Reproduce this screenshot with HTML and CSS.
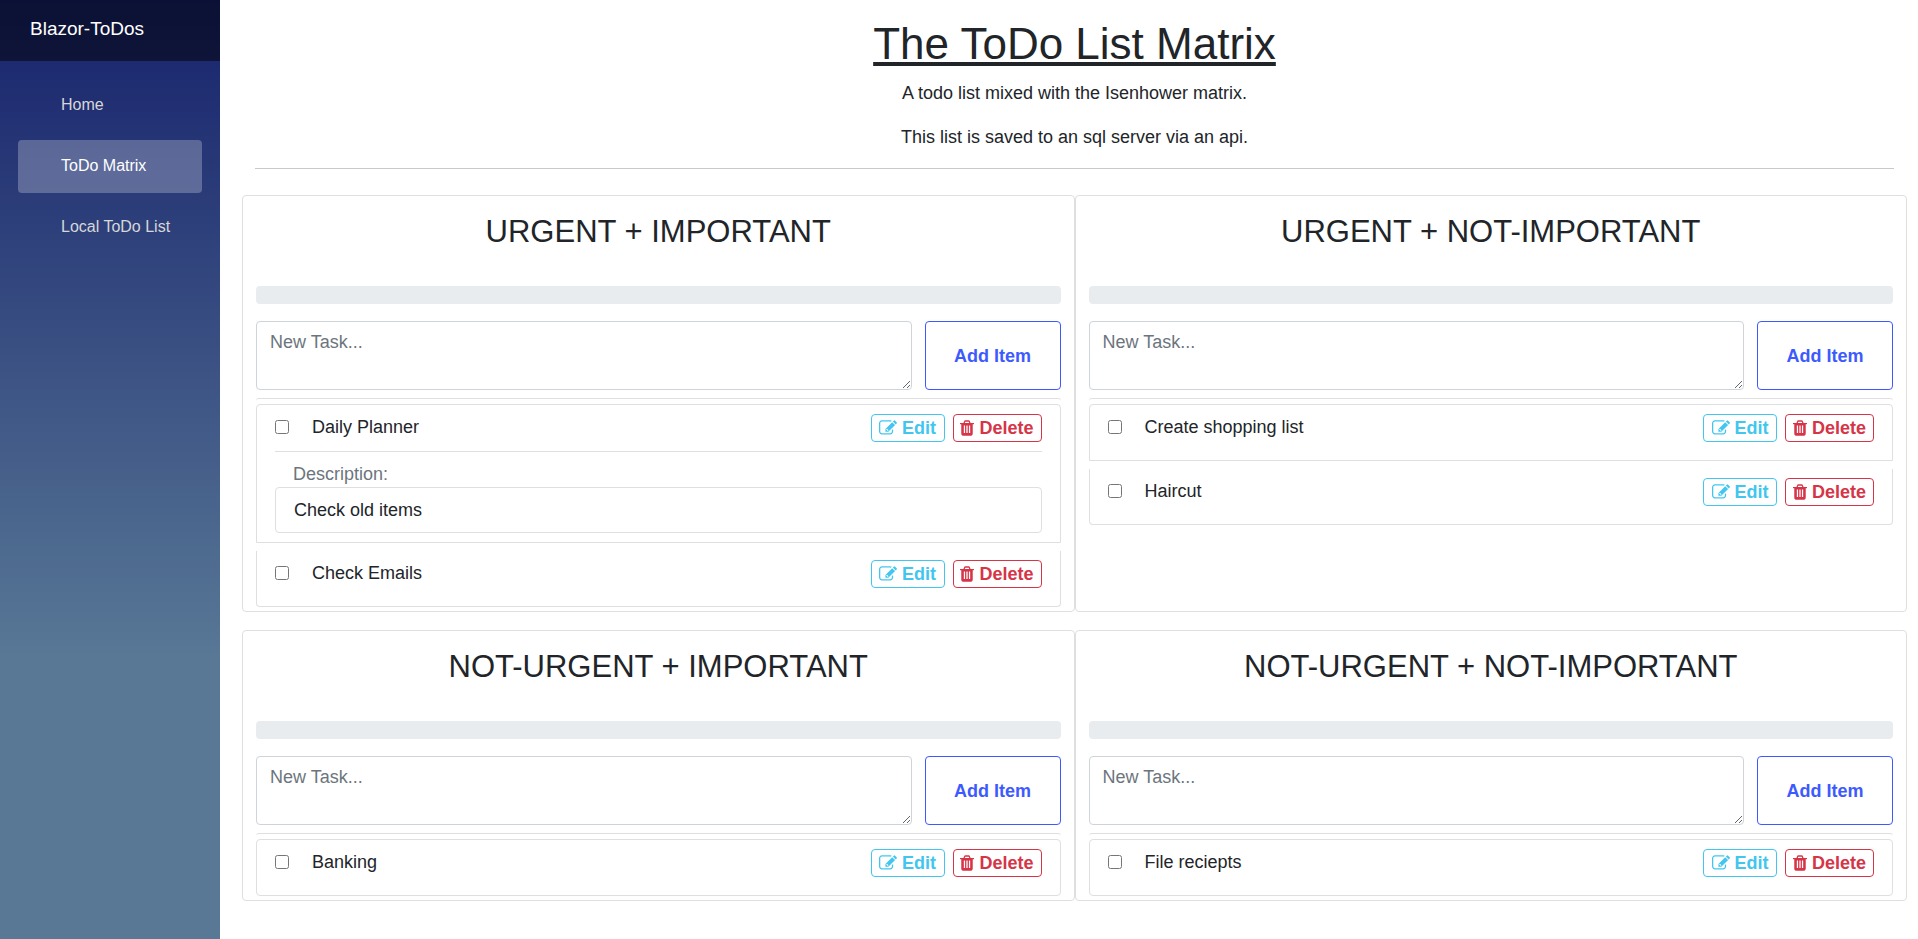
FILE: index.html
```
<!DOCTYPE html>
<html lang="en">
<head>
<meta charset="utf-8">
<title>Blazor-ToDos</title>
<link rel="stylesheet" href="styles.css">
</head>
<body>
<svg class="sprite" aria-hidden="true">
  <symbol id="edit" viewBox="0 0 1792 1792"><path d="M888 1184l60-60-152-152-60 60v56h96v96h56zM1408 1058v190q0 119-84.500 203.500t-203.500 84.500h-832q-119 0-203.500-84.500t-84.500-203.500v-832q0-119 84.500-203.500t203.500-84.500h832q63 0 117 25 15 7 18 23 3 17-9 29l-49 49q-14 14-32 8-23-6-45-6h-832q-66 0-113 47t-47 113v832q0 66 47 113t113 47h832q66 0 113-47t47-113v-126q0-13 9-22l64-64q15-15 35-7t20 29zm-96-738l288 288-672 672h-288v-288zm444 132l-92 92-288-288 92-92q28-28 68-28t68 28l152 152q28 28 28 68t-28 68z"/></symbol>
  <symbol id="trash" viewBox="0 0 1408 1792"><path d="M512 1376v-704q0-14-9-23t-23-9h-64q-14 0-23 9t-9 23v704q0 14 9 23t23 9h64q14 0 23-9t9-23zm256 0v-704q0-14-9-23t-23-9h-64q-14 0-23 9t-9 23v704q0 14 9 23t23 9h64q14 0 23-9t9-23zm256 0v-704q0-14-9-23t-23-9h-64q-14 0-23 9t-9 23v704q0 14 9 23t23 9h64q14 0 23-9t9-23zm-544-992h448l-48-117q-7-9-17-11h-317q-10 2-17 11zm928 32v64q0 14-9 23t-23 9h-96v948q0 83-47 143.500t-113 60.500h-832q-66 0-113-58.500t-47-141.500v-952h-96q-14 0-23-9t-9-23v-64q0-14 9-23t23-9h309l70-167q15-37 54-63t79-26h320q40 0 79 26t54 63l70 167h309q14 0 23 9t9 23z"/></symbol>
</svg>
<div class="page">
  <aside class="sidebar">
    <div class="brand-row"><a class="brand" href="#">Blazor-ToDos</a></div>
    <nav class="nav">
      <a class="nav-link" href="#">Home</a>
      <a class="nav-link active" href="#" aria-current="page">ToDo Matrix</a>
      <a class="nav-link" href="#">Local ToDo List</a>
    </nav>
  </aside>
  <main class="main">
    <header class="intro">
      <h1>The ToDo List Matrix</h1>
      <p>A todo list mixed with the Isenhower matrix.</p>
      <p>This list is saved to an sql server via an api.</p>
    </header>
    <div class="matrix">
      <section class="card">
        <h3>URGENT + IMPORTANT</h3>
        <div class="progress"></div>
        <form class="new-task">
          <textarea placeholder="New Task..." aria-label="New urgent and important task"></textarea>
          <button class="add" type="button">Add Item</button>
        </form>
        <div class="list-edge"></div>
        <ul class="tasks">
          <li class="task">
            <div class="task-row">
              <input type="checkbox" id="t1"><label for="t1">Daily Planner</label>
              <button class="btn edit" type="button"><svg><use href="#edit"/></svg>Edit</button>
              <button class="btn delete" type="button"><svg><use href="#trash"/></svg>Delete</button>
            </div>
            <div class="details">
              <div class="details-title">Description:</div>
              <div class="details-text">Check old items</div>
            </div>
          </li>
          <li class="task">
            <div class="task-row">
              <input type="checkbox" id="t2"><label for="t2">Check Emails</label>
              <button class="btn edit" type="button"><svg><use href="#edit"/></svg>Edit</button>
              <button class="btn delete" type="button"><svg><use href="#trash"/></svg>Delete</button>
            </div>
          </li>
        </ul>
      </section>
      <section class="card">
        <h3>URGENT + NOT-IMPORTANT</h3>
        <div class="progress"></div>
        <form class="new-task">
          <textarea placeholder="New Task..." aria-label="New urgent and not-important task"></textarea>
          <button class="add" type="button">Add Item</button>
        </form>
        <div class="list-edge"></div>
        <ul class="tasks">
          <li class="task">
            <div class="task-row">
              <input type="checkbox" id="t3"><label for="t3">Create shopping list</label>
              <button class="btn edit" type="button"><svg><use href="#edit"/></svg>Edit</button>
              <button class="btn delete" type="button"><svg><use href="#trash"/></svg>Delete</button>
            </div>
          </li>
          <li class="task">
            <div class="task-row">
              <input type="checkbox" id="t4"><label for="t4">Haircut</label>
              <button class="btn edit" type="button"><svg><use href="#edit"/></svg>Edit</button>
              <button class="btn delete" type="button"><svg><use href="#trash"/></svg>Delete</button>
            </div>
          </li>
        </ul>
      </section>
      <section class="card">
        <h3>NOT-URGENT + IMPORTANT</h3>
        <div class="progress"></div>
        <form class="new-task">
          <textarea placeholder="New Task..." aria-label="New not-urgent and important task"></textarea>
          <button class="add" type="button">Add Item</button>
        </form>
        <div class="list-edge"></div>
        <ul class="tasks">
          <li class="task">
            <div class="task-row">
              <input type="checkbox" id="t5"><label for="t5">Banking</label>
              <button class="btn edit" type="button"><svg><use href="#edit"/></svg>Edit</button>
              <button class="btn delete" type="button"><svg><use href="#trash"/></svg>Delete</button>
            </div>
          </li>
        </ul>
      </section>
      <section class="card">
        <h3>NOT-URGENT + NOT-IMPORTANT</h3>
        <div class="progress"></div>
        <form class="new-task">
          <textarea placeholder="New Task..." aria-label="New not-urgent and not-important task"></textarea>
          <button class="add" type="button">Add Item</button>
        </form>
        <div class="list-edge"></div>
        <ul class="tasks">
          <li class="task">
            <div class="task-row">
              <input type="checkbox" id="t6"><label for="t6">File reciepts</label>
              <button class="btn edit" type="button"><svg><use href="#edit"/></svg>Edit</button>
              <button class="btn delete" type="button"><svg><use href="#trash"/></svg>Delete</button>
            </div>
          </li>
        </ul>
      </section>
    </div>
  </main>
</div>
</body>
</html>
```
FILE: styles.css
```
* { box-sizing: border-box; }

body {
  margin: 0;
  background: #fff;
  color: #212529;
  font: 18px/26px "Liberation Sans", Arial, sans-serif;
}

h1, h3, p, ul { margin: 0; padding: 0; font-weight: 400; }
button, textarea { font: inherit; }
.sprite { display: none; }

.page { display: flex; min-height: 100vh; }

/* Sidebar */
.sidebar {
  flex: 0 0 220px;
  min-width: 0;
  background: linear-gradient(180deg, #17226c 0%, #587896 70%);
}
.brand-row {
  display: flex;
  align-items: center;
  height: 61px;
  padding: 0 30px 3px;
  background: rgba(0, 0, 0, 0.5);
}
.brand { color: #fff; font-size: 19px; text-decoration: none; }
.nav {
  display: flex;
  flex-direction: column;
  gap: 8px;
  padding: 18px;
}
.nav-link {
  padding: 0 0 2px 43px;
  border-radius: 4px;
  color: #d7d7d7;
  font-size: 16px;
  line-height: 51px;
  text-decoration: none;
  white-space: nowrap;
}
.nav-link.active { background: rgba(255, 255, 255, 0.25); color: #fff; }

/* Heading */
.main { flex: 1; min-width: 0; padding: 18px 11px 0 22px; }
.intro {
  margin: 0 13px 26px;
  border-bottom: 1px solid #c8c9ca;
  text-align: center;
}
h1 { margin-bottom: 11px; font-size: 44px; line-height: 51px; text-decoration: underline; }
.intro p { margin-bottom: 18px; }

/* Matrix */
.matrix { display: grid; grid-template-columns: 1fr 1fr; row-gap: 18px; }
.card {
  padding: 18px 13px 4px;
  border: 1px solid #dfdfdf;
  border-radius: 4px;
}
h3 { margin-bottom: 37px; font-size: 31px; line-height: 35px; text-align: center; }
.progress { height: 18px; border-radius: 4px; background: #e9ecef; }

.new-task { display: flex; gap: 13px; margin: 17px 0 8px; }
.new-task textarea {
  flex: 1;
  min-width: 0;
  height: 69px;
  padding: 7px 13px;
  border: 1px solid #ced4da;
  border-radius: 4px;
  color: #212529;
}
.new-task textarea::placeholder { color: #6c757d; }
.add {
  flex: 0 0 136px;
  padding: 0;
  border: 1px solid #3d5afe;
  border-radius: 4px;
  background: transparent;
  color: #3d5afe;
  font-weight: 700;
}

/* Tasks */
.list-edge { height: 6px; border-top: 1px solid #dfdfdf; border-radius: 4px; }
.tasks { display: flex; flex-direction: column; gap: 8px; list-style: none; }
.task {
  padding: 9px 18px;
  border: 1px solid #dfdfdf;
}
.task + .task { border-top: 0; }
.task:first-child { border-radius: 4px 4px 0 0; }
.task:last-child { border-radius: 0 0 4px 4px; }
.task:only-child { border-radius: 4px; }
.task-row { display: flex; align-items: flex-start; height: 37px; }
.task-row input { width: 14px; height: 14px; margin: 6px 23px 0 0; }
.task-row label { flex: 1; }
.btn {
  display: flex;
  align-items: center;
  justify-content: center;
  gap: 5px;
  height: 28px;
  margin-left: 8px;
  padding: 0;
  border: 1px solid;
  border-radius: 4px;
  background: transparent;
  font-weight: 700;
}
.btn svg { height: 18px; fill: currentColor; }
.edit { width: 74px; color: #42c6ef; }
.edit svg { width: 18px; }
.delete { width: 89px; color: #d63447; }
.delete svg { width: 14px; }

.details { border-top: 1px solid #dfdfdf; padding-top: 9px; }
.details-title { padding-left: 18px; color: #6c757d; }
.details-text { padding: 9px 18px; border: 1px solid #dfdfdf; border-radius: 4px; }
```
